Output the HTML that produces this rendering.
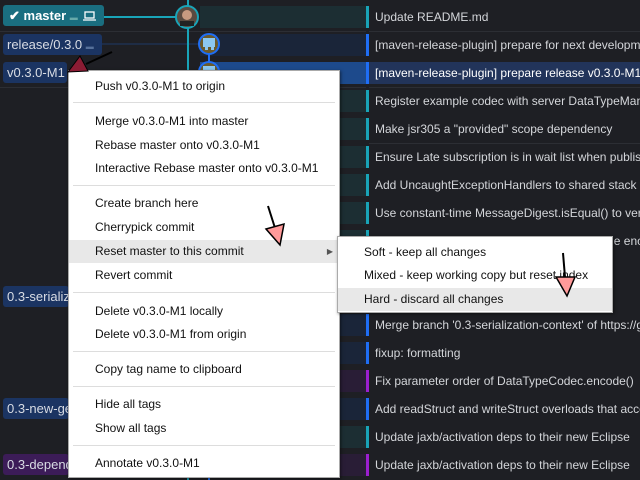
<!DOCTYPE html>
<html><head><meta charset="utf-8">
<style>
*{margin:0;padding:0;box-sizing:border-box}
body{width:640px;height:480px;overflow:hidden;background:#1e1f24;font-family:"Liberation Sans",sans-serif;position:relative}
.row{position:absolute;left:0;width:640px;height:28px;overflow:hidden}
.gbg{position:absolute;left:200px;width:166px;top:3px;height:22px}
.bar{position:absolute;left:366px;width:3px;top:3px;height:22px}
.msg{position:absolute;left:375px;top:0;line-height:28px;color:#d4d6da;font-size:12px;white-space:nowrap}
.sep{position:absolute;left:0;right:0;height:1px;background:#2c2e34}
.lbl{position:absolute;left:3px;height:21px;border-radius:3px;color:#d8dce4;font-size:13px;line-height:21px;padding-left:4px;white-space:nowrap;overflow:hidden}
.menu{position:absolute;background:#fff;border:1px solid #aaa;box-shadow:1px 1px 3px rgba(0,0,0,.5)}
.mi{position:absolute;left:0;right:0;height:23px;line-height:23px;padding-left:26px;font-size:12px;color:#111;white-space:nowrap}
.hl{background:#e8e8e8}
.ms{position:absolute;left:4px;right:4px;height:1px;background:#ddd}
</style></head><body>

<div class="row" style="top:3px"><div class="gbg" style="background:#1c2e33"></div><div class="bar" style="background:#19a4b8"></div><div class="msg">Update README.md</div></div>
<div class="row" style="top:31px"><div class="gbg" style="background:#1a2539"></div><div class="bar" style="background:#1f6ef5"></div><div class="msg">[maven-release-plugin] prepare for next development iteration</div></div>
<div class="row" style="top:59px;"><div class="gbg" style="background:#1d4a8c"></div><div style="position:absolute;left:369px;width:271px;top:3px;height:22px;background:#22345a"></div><div class="bar" style="background:#1f6ef5"></div><div class="msg" style="color:#fff">[maven-release-plugin] prepare release v0.3.0-M1</div></div>
<div class="row" style="top:87px"><div class="gbg" style="background:#1c2e33"></div><div class="bar" style="background:#19a4b8"></div><div class="msg">Register example codec with server DataTypeManager</div></div>
<div class="row" style="top:115px"><div class="gbg" style="background:#1c2e33"></div><div class="bar" style="background:#19a4b8"></div><div class="msg">Make jsr305 a "provided" scope dependency</div></div>
<div class="row" style="top:143px"><div class="gbg" style="background:#1c2e33"></div><div class="bar" style="background:#19a4b8"></div><div class="msg">Ensure Late subscription is in wait list when publishing</div></div>
<div class="row" style="top:171px"><div class="gbg" style="background:#1c2e33"></div><div class="bar" style="background:#19a4b8"></div><div class="msg">Add UncaughtExceptionHandlers to shared stack</div></div>
<div class="row" style="top:199px"><div class="gbg" style="background:#1c2e33"></div><div class="bar" style="background:#19a4b8"></div><div class="msg">Use constant-time MessageDigest.isEqual() to verify</div></div>
<div class="row" style="top:227px"><div class="gbg" style="background:#1c2e33"></div><div class="bar" style="background:#19a4b8"></div><div class="msg">Add some missing null checks in the message encoding</div></div>
<div class="row" style="top:255px"><div class="gbg" style="background:#1a2539"></div><div class="bar" style="background:#1f6ef5"></div></div>
<div class="row" style="top:283px"><div class="gbg" style="background:#1a2539"></div><div class="bar" style="background:#1f6ef5"></div></div>
<div class="row" style="top:311px"><div class="gbg" style="background:#1a2539"></div><div class="bar" style="background:#1f6ef5"></div><div class="msg">Merge branch '0.3-serialization-context' of https://github</div></div>
<div class="row" style="top:339px"><div class="gbg" style="background:#1a2539"></div><div class="bar" style="background:#1f6ef5"></div><div class="msg">fixup: formatting</div></div>
<div class="row" style="top:367px"><div class="gbg" style="background:#291d36"></div><div class="bar" style="background:#9b1fd0"></div><div class="msg">Fix parameter order of DataTypeCodec.encode()</div></div>
<div class="row" style="top:395px"><div class="gbg" style="background:#1a2539"></div><div class="bar" style="background:#1f6ef5"></div><div class="msg">Add readStruct and writeStruct overloads that accept</div></div>
<div class="row" style="top:423px"><div class="gbg" style="background:#1c2e33"></div><div class="bar" style="background:#19a4b8"></div><div class="msg">Update jaxb/activation deps to their new Eclipse</div></div>
<div class="row" style="top:451px"><div class="gbg" style="background:#291d36"></div><div class="bar" style="background:#9b1fd0"></div><div class="msg">Update jaxb/activation deps to their new Eclipse</div></div>

<div class="sep" style="top:31px;width:366px"></div>
<div class="sep" style="top:87px;width:366px"></div>
<div class="sep" style="top:31px;left:369px"></div>
<div class="sep" style="top:87px;left:369px"></div>
<div class="sep" style="top:143px;left:369px"></div>

<svg style="position:absolute;left:0;top:0" width="640" height="480">
<line x1="104" y1="17" x2="176" y2="17" stroke="#19a4b8" stroke-width="2"/>
<line x1="102" y1="44" x2="198" y2="44" stroke="#1d3a66" stroke-width="1"/>
<line x1="188" y1="0" x2="188" y2="480" stroke="#19a4b8" stroke-width="2"/>
<line x1="209" y1="44" x2="209" y2="480" stroke="#1f6ef5" stroke-width="2"/>
<circle cx="187" cy="17" r="11" fill="#5a4a40" stroke="#19a4b8" stroke-width="2"/>
<circle cx="187" cy="15" r="5" fill="#c89a80"/>
<rect x="180" y="21" width="14" height="5" fill="#222"/>
<circle cx="209" cy="44" r="10" fill="#6b5a2a" stroke="#1f6ef5" stroke-width="2"/>
<rect x="203" y="38" width="12" height="9" fill="#8cc8f0"/><rect x="205" y="47" width="3" height="3" fill="#8cc8f0"/><rect x="211" y="47" width="3" height="3" fill="#8cc8f0"/>
<circle cx="209" cy="72" r="10" fill="#6b5a2a" stroke="#1f6ef5" stroke-width="2"/>
<rect x="203" y="66" width="12" height="9" fill="#8cc8f0"/>
</svg>

<div class="lbl" style="top:5px;width:101px;background:#1a6e80;color:#fff;font-weight:bold;padding-left:6px">✔ master <span style="color:#6aa;font-size:8px;font-weight:normal">▬</span>
<svg width="13" height="10" style="vertical-align:-1px;margin-left:2px"><rect x="2" y="1" width="9" height="6" fill="none" stroke="#fff" stroke-width="1.3"/><line x1="0" y1="9" x2="13" y2="9" stroke="#fff" stroke-width="1.3"/></svg></div>
<div class="lbl" style="top:34px;width:99px;background:#1b3462">release/0.3.0 <span style="color:#56709a;font-size:8px">▬</span></div>
<div class="lbl" style="top:62px;width:64px;background:#1b3462">v0.3.0-M1</div>
<div class="lbl" style="top:286px;width:66px;background:#1b3462">0.3-serialization</div>
<div class="lbl" style="top:398px;width:66px;background:#1b3462">0.3-new-generics</div>
<div class="lbl" style="top:454px;width:66px;background:#3c1c58">0.3-dependencies</div>

<div class="menu" style="left:68px;top:70px;width:272px;height:408px">
<div class="mi" style="top:4px">Push v0.3.0-M1 to origin</div>
<div class="ms" style="top:31px"></div>
<div class="mi" style="top:39px">Merge v0.3.0-M1 into master</div>
<div class="mi" style="top:63px">Rebase master onto v0.3.0-M1</div>
<div class="mi" style="top:86px">Interactive Rebase master onto v0.3.0-M1</div>
<div class="ms" style="top:114px"></div>
<div class="mi" style="top:121px">Create branch here</div>
<div class="mi" style="top:145px">Cherrypick commit</div>
<div class="mi hl" style="top:169px">Reset master to this commit<span style="position:absolute;right:6px;top:0;font-size:8px;color:#555">▶</span></div>
<div class="mi" style="top:193px">Revert commit</div>
<div class="ms" style="top:221px"></div>
<div class="mi" style="top:229px">Delete v0.3.0-M1 locally</div>
<div class="mi" style="top:252px">Delete v0.3.0-M1 from origin</div>
<div class="ms" style="top:280px"></div>
<div class="mi" style="top:287px">Copy tag name to clipboard</div>
<div class="ms" style="top:315px"></div>
<div class="mi" style="top:322px">Hide all tags</div>
<div class="mi" style="top:346px">Show all tags</div>
<div class="ms" style="top:374px"></div>
<div class="mi" style="top:381px">Annotate v0.3.0-M1</div>
</div>

<div class="menu" style="left:337px;top:236px;width:276px;height:77px">
<div class="mi" style="top:4px">Soft - keep all changes</div>
<div class="mi" style="top:27px">Mixed - keep working copy but reset index</div>
<div class="mi hl" style="top:51px">Hard - discard all changes</div>
</div>

<svg style="position:absolute;left:0;top:0" width="640" height="480">
<line x1="112" y1="52" x2="86" y2="64" stroke="#000" stroke-width="2"/>
<polygon points="68,72 80,56 88,71" fill="#8b1c34" stroke="#000" stroke-width="1"/>
<line x1="268" y1="206" x2="275" y2="228" stroke="#000" stroke-width="2"/>
<polygon points="266,229 284,224 280,245" fill="#ff9a9a" stroke="#000" stroke-width="1.5"/>
<line x1="563" y1="253" x2="565" y2="277" stroke="#000" stroke-width="2"/>
<polygon points="556,277 575,277 567,296" fill="#ff9a9a" stroke="#000" stroke-width="1.5"/>
</svg>
</body></html>
